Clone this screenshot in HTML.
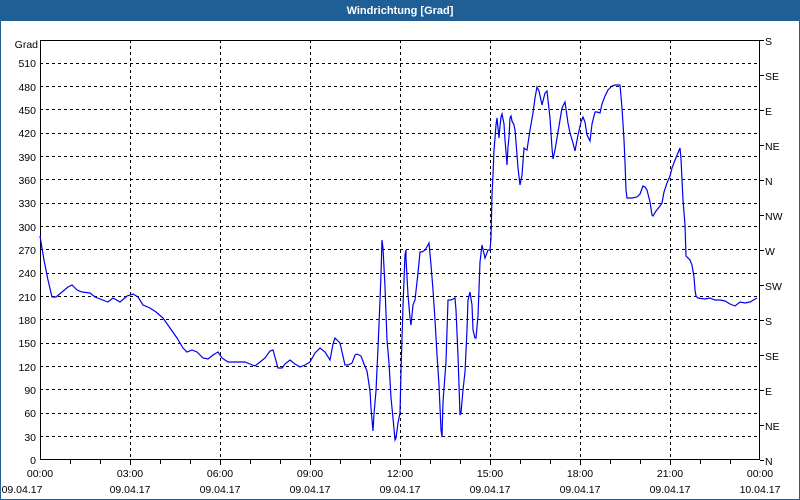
<!DOCTYPE html>
<html><head><meta charset="utf-8"><style>
html,body{margin:0;padding:0;width:800px;height:500px;overflow:hidden;background:#fff}
</style></head><body>
<svg width="800" height="500" xmlns="http://www.w3.org/2000/svg" font-family="Liberation Sans, sans-serif" font-size="10.5">
<rect x="0" y="0" width="800" height="500" fill="#1f5f96"/>
<rect x="1" y="21" width="798" height="478" fill="#fff"/>
<text x="400" y="14" fill="#fff" font-weight="bold" text-anchor="middle" font-size="11">Windrichtung [Grad]</text>
<g stroke="#000" stroke-dasharray="3,3" stroke-width="1">
<path d="M40 436.5H760M40 413.5H760M40 389.5H760M40 366.5H760M40 343.5H760M40 319.5H760M40 296.5H760M40 273.5H760M40 249.5H760M40 226.5H760M40 203.5H760M40 179.5H760M40 156.5H760M40 133.5H760M40 109.5H760M40 86.5H760M40 63.5H760"/>
<path d="M130.5 40V460M220.5 40V460M310.5 40V460M400.5 40V460M490.5 40V460M580.5 40V460M670.5 40V460"/>
</g>
<rect x="40.5" y="40.5" width="719" height="419" fill="none" stroke="#000"/>
<g stroke="#000">
<path d="M70.5 460v4M100.5 460v4M130.5 460v5M160.5 460v4M190.5 460v4M220.5 460v5M250.5 460v4M280.5 460v4M310.5 460v5M340.5 460v4M370.5 460v4M400.5 460v5M430.5 460v4M460.5 460v4M490.5 460v5M520.5 460v4M550.5 460v4M580.5 460v5M610.5 460v4M640.5 460v4M670.5 460v5M700.5 460v4M730.5 460v4"/>
<path d="M760 40.5h4M760 75.5h4M760 110.5h4M760 145.5h4M760 180.5h4M760 215.5h4M760 250.5h4M760 285.5h4M760 320.5h4M760 355.5h4M760 390.5h4M760 425.5h4M760 460.5h4"/>
</g>
<g text-anchor="end">
<text x="38" y="48">Grad</text>
<text x="36" y="67">510</text><text x="36" y="91">480</text><text x="36" y="114">450</text><text x="36" y="137">420</text><text x="36" y="161">390</text><text x="36" y="184">360</text><text x="36" y="207">330</text><text x="36" y="231">300</text><text x="36" y="254">270</text><text x="36" y="277">240</text><text x="36" y="301">210</text><text x="36" y="324">180</text><text x="36" y="347">150</text><text x="36" y="371">120</text><text x="36" y="394">90</text><text x="36" y="417">60</text><text x="36" y="441">30</text><text x="36" y="464">0</text>
</g>
<g>
<text x="765" y="45">S</text><text x="765" y="80">SE</text><text x="765" y="115">E</text><text x="765" y="150">NE</text><text x="765" y="185">N</text><text x="765" y="220">NW</text><text x="765" y="255">W</text><text x="765" y="290">SW</text><text x="765" y="325">S</text><text x="765" y="360">SE</text><text x="765" y="395">E</text><text x="765" y="430">NE</text><text x="765" y="465">N</text>
</g>
<g text-anchor="middle">
<text x="40" y="477">00:00</text><text x="130" y="477">03:00</text><text x="220" y="477">06:00</text><text x="310" y="477">09:00</text><text x="400" y="477">12:00</text><text x="490" y="477">15:00</text><text x="580" y="477">18:00</text><text x="670" y="477">21:00</text><text x="760" y="477">00:00</text>
<text x="22" y="493">09.04.17</text><text x="130" y="493">09.04.17</text><text x="220" y="493">09.04.17</text><text x="310" y="493">09.04.17</text><text x="400" y="493">09.04.17</text><text x="490" y="493">09.04.17</text><text x="580" y="493">09.04.17</text><text x="670" y="493">09.04.17</text><text x="760" y="493">10.04.17</text>
</g>
<polyline fill="none" stroke="#0000ee" stroke-width="1.2" points="40,236 44,260 48,280 52,297 56,297 62,292 68,287 72,285 77,290 82,292 90,293 95,297 100,299 108,302 113,298 120,302 127,296 133,294 138,297 143,305 150,308 156,312 163,318 170,328 177,338 183,348 187,352 192,350 197,352 203,358 208,359 213,355 218,352 222,358 228,362 235,362 245,362 250,364 255,366 260,362 265,358 270,351 273,350 278,368 282,368 285,364 290,360 295,364 300,367 305,365 310,362 315,353 320,348 325,352 330,360 333,344 335,338 340,343 345,365 348,365 352,363 355,355 357,354 361,356 364,364 367,371 370,391 371,408 373,431 374,414 376,391 378,348 380,300 381,274 382,240 383,248 385,287 387,340 389,363 391,398 393,418 395,440 396,438 398,423 400,413 401,371 403,306 405,255 406,250 406,258 408,295 410,318 411,325 413,305 415,300 418,273 420,252 422,252 425,250 428,245 429,243 431,265 433,290 435,320 437,355 439,385 441,430 442,437 443,402 446,362 448,300 451,300 455,298 456,310 458,356 459,385 460,415 461,413 463,390 465,372 467,330 468,300 470,292 472,305 473,330 475,338 476,338 478,316 480,262 482,245 485,258 488,250 490,250 491,238 492,195 493,175 494,150 495,138 496,125 497,118 499,138 500,126 501,117 502,114 504,124 505,140 506,152 507,165 508,147 509,137 510,118 511,116 512,121 514,125 515,130 516,142 518,168 520,185 522,175 524,148 525,149 527,150 530,130 533,113 535,98 537,87 539,91 542,105 545,93 547,91 550,118 552,148 553,159 555,150 557,138 560,120 562,108 565,102 568,123 570,133 573,143 575,151 578,135 581,122 583,117 585,122 587,135 590,141 592,124 595,112 597,112 600,113 602,104 605,96 608,90 612,86 615,85 620,85 622,108 624,140 625,162 626,190 627,198 632,198 637,197 640,194 643,186 645,187 647,190 650,202 652,215 653,216 656,211 660,206 662,203 664,192 667,183 670,176 672,168 675,160 680,148 681,159 683,200 685,225 686,256 690,260 692,265 694,277 695,290 696,296 698,298 705,299 710,298 715,300 720,300 725,301 730,304 735,306 740,302 745,303 750,302 757,298"/>
</svg>
</body></html>
